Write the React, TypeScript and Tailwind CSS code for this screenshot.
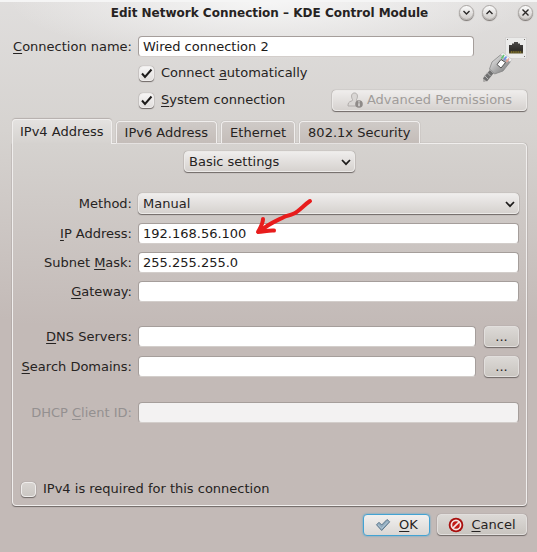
import type { ReactNode } from "react";

const raised =
  "rounded-[4px] border border-[#eceae8] bg-linear-to-b from-[#efedec] to-[#d6d2cf] shadow-[0_1px_1px_#6f6967,0_0_1px_#857e7b]";
const field =
  "block h-[21px] w-full min-w-0 rounded-[4px] border border-[#a59e9b] border-b-[#d3cecb] bg-white px-1 text-[13px] leading-[18px] text-[#1c1a19] outline-none disabled:bg-[#f3f2f2]";

function U({ children }: { children: ReactNode }) {
  return <span className="underline decoration-1 underline-offset-2">{children}</span>;
}

function WindowButton({ label, path }: { label: string; path: string }) {
  return (
    <button
      type="button"
      aria-label={label}
      className="flex size-[15px] items-center justify-center rounded-full border border-[#aaa6a3] bg-linear-to-b from-[#fbfbfb] to-[#d0cdca] shadow-[0_1px_1px_#77716e]"
    >
      <svg viewBox="0 0 9 9" className="size-[9px]" fill="none" stroke="#2b2928" strokeWidth="1.400" aria-hidden="true">
        <path d={path} />
      </svg>
    </button>
  );
}

function Check({ id, checked = false, children }: { id: string; checked?: boolean; children: ReactNode }) {
  return (
    <div className="flex h-[22px] items-center gap-[7px]">
      <span className="relative flex">
        <input
          id={id}
          type="checkbox"
          defaultChecked={checked}
          className={
            "peer size-[15px] appearance-none rounded-[4px] border border-[#efedec] shadow-[0_1px_1px_#6f6967,0_0_1px_#857e7b] " +
            (checked ? "bg-linear-to-b from-[#f6f5f5] to-[#e2dfdd]" : "bg-linear-to-b from-[#d8d4d1] to-[#cbc7c3]")
          }
        />
        <svg
          viewBox="0 0 15 15"
          className="pointer-events-none absolute inset-0 hidden size-[15px] peer-checked:block"
          fill="none"
          stroke="#1d1b1a"
          strokeWidth="2"
          aria-hidden="true"
        >
          <path d="M3 7.5 6 11 12.5 3.5" />
        </svg>
      </span>
      <label htmlFor={id}>{children}</label>
    </div>
  );
}

function Dropdown({ id, value, label }: { id: string; value: string; label?: string }) {
  return (
    <div className="relative w-full">
      <select
        id={id}
        aria-label={label}
        className={"block h-[21px] w-full appearance-none pr-5 pl-1 text-[13px] leading-[18px] outline-none " + raised}
      >
        <option>{value}</option>
      </select>
      <svg
        viewBox="0 0 10 10"
        className="pointer-events-none absolute top-[6px] right-1 size-[10px]"
        fill="none"
        stroke="#1d1b1a"
        strokeWidth="1.700"
        aria-hidden="true"
      >
        <path d="M1 3 5 7.200 9 3" />
      </svg>
    </div>
  );
}

function Row({ id, label, muted = false, children }: { id: string; label: ReactNode; muted?: boolean; children: ReactNode }) {
  return (
    <div className="grid grid-cols-[119px_minmax(0,1fr)] items-center gap-[6px]">
      <label htmlFor={id} className={"text-right whitespace-nowrap " + (muted ? "text-[#949090]" : "")}>
        {label}
      </label>
      <div className="flex gap-2">{children}</div>
    </div>
  );
}

function MoreButton({ label }: { label: string }) {
  return (
    <button
      type="button"
      aria-label={label}
      className="h-[21px] w-[35px] shrink-0 rounded-[4px] border border-[#e2dfdd] bg-linear-to-b from-[#dcd9d6] to-[#c9c5c0] leading-[18px] shadow-[0_1px_1px_#6f6967,0_0_1px_#857e7b]"
    >
      ...
    </button>
  );
}

function EthernetIcon() {
  return (
    <svg viewBox="0 0 44 46" className="h-[46px] w-[44px]" aria-hidden="true">
      <defs>
        <linearGradient id="plug" x1="0" y1="0" x2="1" y2="1">
          <stop offset="0" stopColor="#f2f2f2" />
          <stop offset="0.5" stopColor="#b0b0b0" />
          <stop offset="1" stopColor="#6e6e6e" />
        </linearGradient>
        <linearGradient id="jack" x1="0" y1="0" x2="0" y2="1">
          <stop offset="0" stopColor="#4a4846" />
          <stop offset="0.7" stopColor="#2f2d2a" />
          <stop offset="1" stopColor="#5c5428" />
        </linearGradient>
      </defs>
      <rect x="22.5" y="1.5" width="21" height="21" fill="#ebebea" stroke="#d6d4d3" />
      <g fill="#77716e">
        <rect x="24" y="3" width="1" height="1" />
        <rect x="41" y="3" width="1" height="1" />
        <rect x="41" y="20" width="1" height="1" />
      </g>
      <path d="M26 17.500V9h3V7.500h2V6h4v1.500h2V9h3v8.500z" fill="url(#jack)" />
      <path d="M28 16h10" stroke="#8a7a2a" strokeWidth="1.500" strokeDasharray="1 .8" />
      <path d="M0 45.500 5 38.500" stroke="#b0aeac" strokeWidth="4" />
      <path d="M2 44 10 34" stroke="#707070" strokeWidth="5" />
      <path d="M1.500 39.500 5 43M4 36.500 7.500 40M6.500 33.500 10 37" stroke="#b9b9b9" strokeWidth="1" />
      <path d="M6.500 33 9 26 18 18.500 27.500 25.500 20 35 11.500 38z" fill="url(#plug)" stroke="#858585" strokeWidth=".8" />
      <path d="M17.500 18.500 20 16.500 29 23.500 27 26z" fill="#f1f1f1" stroke="#b5b5b5" strokeWidth=".5" />
      <path d="m14 28.500 4-5 4.500 3-4.500 5.500z" fill="#fff" stroke="#444" strokeWidth=".9" />
      <path d="m18.500 22.500 2.500-3.500" stroke="#5ec774" strokeWidth="1.500" />
      <path d="m21 24 2.500-3.500" stroke="#698fea" strokeWidth="1.500" />
      <path d="m23.500 26 2.500-3.500" stroke="#e8a195" strokeWidth="1.500" />
    </svg>
  );
}

function UserIcon() {
  return (
    <svg viewBox="0 0 16 16" className="size-4" aria-hidden="true">
      <path
        d="M5.500 7.500C3.700 4.500 4.500 1 7.500 1s3.800 3.500 2 6.500c-.4 1 .3 1.300 1.500 1.800 2 .8 2.500 1.700 2.500 4.700H1c0-3 .8-4 3-4.800 1.200-.4 1.800-.8 1.500-1.700z"
        fill="#d9d6d4"
        stroke="#b0acaa"
      />
      <circle cx="12" cy="12" r="3.800" fill="#8e8a88" />
      <path d="M12 11.300v3M12 9.300v1.200" stroke="#e8e6e5" strokeWidth="1.300" />
    </svg>
  );
}

function OkIcon() {
  return (
    <svg viewBox="0 0 16 14" className="h-[14px] w-4" aria-hidden="true">
      <path d="M1.500 6.800 4 4.300 6.700 7 12 1.500 14.700 3.800 6.700 12.500z" fill="#8faabd" stroke="#5d788c" />
      <path d="M3 6.700 6.700 10.300 13 3.500" fill="none" stroke="#b5cad9" />
    </svg>
  );
}

function CancelIcon() {
  return (
    <svg viewBox="0 0 16 16" className="size-4" aria-hidden="true">
      <circle cx="8" cy="8" r="7.300" fill="#a80f0e" />
      <circle cx="8" cy="8" r="5.300" fill="#c21a17" />
      <circle cx="8" cy="8" r="4.600" fill="none" stroke="#f4e6e5" strokeWidth="1.700" />
      <path d="m4.800 11.200 6.400-6.400" stroke="#f4e6e5" strokeWidth="1.700" />
    </svg>
  );
}

const tabs = ["IPv4 Address", "IPv6 Address", "Ethernet", "802.1x Security"];

export default function App() {
  return (
    <div className="min-h-screen bg-[radial-gradient(ellipse_260px_60px_at_50%_0,#f6f6f6,transparent),linear-gradient(#e0dedd_0,#d6d3d0_130px,#c3bab7_320px)] font-['DejaVu_Sans',sans-serif] text-[13px] leading-4 text-[#262322]">
      <header className="flex h-[23px] items-center border-t-2 border-[#f5f5f5] pr-1">
        <h1 className="min-w-0 flex-1 pl-20 text-center text-[12px] font-bold whitespace-nowrap">
          Edit Network Connection – KDE Control Module
        </h1>
        <div className="flex gap-2">
          <WindowButton label="Minimize" path="M1.500 3 4.500 6 7.500 3" />
          <WindowButton label="Maximize" path="M1.500 6 4.500 3 7.500 6" />
          <span className="w-[5px]" />
          <WindowButton label="Close" path="m1.500 1.500 6 6M7.500 1.500l-6 6" />
        </div>
      </header>

      <main className="px-[10px] pt-[13px]">
        <div className="flex">
          <div className="min-w-0 flex-1">
            <div className="flex items-center gap-[6px]">
              <label htmlFor="name" className="w-[122px] shrink-0 text-right whitespace-nowrap">
                <U>C</U>onnection name:
              </label>
              <input id="name" defaultValue="Wired connection 2" className={field} />
            </div>
            <div className="mt-[5px] pl-[129px]">
              <Check id="auto" checked>
                Connect <U>a</U>utomatically
              </Check>
            </div>
          </div>
          <div className="-mb-1 w-[53px] shrink-0 pl-[9px]">
            <EthernetIcon />
          </div>
        </div>
        <div className="mt-[5px] flex items-center justify-between pl-[129px]">
          <Check id="system" checked>
            <U>S</U>ystem connection
          </Check>
          <button
            type="button"
            disabled
            className={"flex h-[21px] w-[195px] items-center justify-center gap-1 whitespace-nowrap text-[#a09c9a] " + raised}
          >
            <UserIcon />
            Advanced Permissions
          </button>
        </div>

        <div role="tablist" className="mt-2 ml-[2px] flex items-end gap-1">
          {tabs.map((tab, i) => (
            <button
              key={tab}
              type="button"
              role="tab"
              aria-selected={i === 0}
              className={
                "rounded-t-[4px] border border-b-0 border-[#f0eeed] whitespace-nowrap " +
                (i === 0
                  ? "relative z-10 -mb-px h-[25px] bg-linear-to-b from-[#e4e2e0] to-[#d5d2cf] px-[7px] shadow-[0_-1px_1px_#b5afac]"
                  : "h-[22px] bg-linear-to-b from-[#cfcac7] to-[#c4bdb9] px-2 shadow-[0_0_1px_#857e7b]")
              }
            >
              {tab}
            </button>
          ))}
        </div>

        <section
          role="tabpanel"
          aria-label="IPv4 Address"
          className="ml-[2px] rounded-[4px] rounded-tl-none border border-[#f0eeed] bg-linear-to-b from-[#d5d2cf] to-[#c3bab7] to-50% pb-[5px] shadow-[0_1px_1px_#6f6967,0_0_1px_#857e7b]"
        >
          <div className="mx-auto w-[171px] pt-[7px]">
            <Dropdown id="mode" value="Basic settings" label="Settings mode" />
          </div>
          <div className="pr-[7px]">
            <div className="mt-[21px]">
              <Row id="method" label="Method:">
                <Dropdown id="method" value="Manual" />
              </Row>
            </div>
            <div className="mt-[9px] flex flex-col gap-2">
              <Row id="ip" label={<><U>I</U>P Address:</>}>
                <div className="relative w-full">
                  <input id="ip" defaultValue="192.168.56.100" className={field} />
                  <svg
                    viewBox="0 0 60 40"
                    className="pointer-events-none absolute -top-[25px] left-[115px] h-10 w-[60px]"
                    fill="none"
                    stroke="#e81c1c"
                    strokeWidth="4"
                    strokeLinecap="round"
                    strokeLinejoin="round"
                    aria-hidden="true"
                  >
                    <path d="M57 3C51 7 46 13 41 15.500S35 17 31 19C23 23 13 27 8 33M10 21C10 26 7 30 5 34 10 34 15 32 21 32.500" />
                  </svg>
                </div>
              </Row>
              <Row id="mask" label={<>Subnet <U>M</U>ask:</>}>
                <input id="mask" defaultValue="255.255.255.0" className={field} />
              </Row>
              <Row id="gateway" label={<><U>G</U>ateway:</>}>
                <input id="gateway" className={field} />
              </Row>
            </div>
            <div className="mt-6 flex flex-col gap-[9px]">
              <Row id="dns" label={<><U>D</U>NS Servers:</>}>
                <input id="dns" className={field} />
                <MoreButton label="Edit DNS servers" />
              </Row>
              <Row id="search" label={<><U>S</U>earch Domains:</>}>
                <input id="search" className={field} />
                <MoreButton label="Edit search domains" />
              </Row>
            </div>
            <div className="mt-[25px]">
              <Row id="dhcp" muted label={<>DHCP <U>C</U>lient ID:</>}>
                <input id="dhcp" disabled className={field} />
              </Row>
            </div>
          </div>
          <div className="mt-[55px] pl-2">
            <Check id="required">IPv4 is required for this connection</Check>
          </div>
        </section>

        <footer className="mt-2 flex justify-end gap-[7px]">
          <button
            type="button"
            className="flex h-[22px] w-[67px] items-center justify-center gap-2 rounded-[4px] border border-[#43a3d3] bg-linear-to-b from-[#f1f0ef] to-[#dad7d4] shadow-[0_0_2px_#43a3d3]"
          >
            <OkIcon />
            <span><U>O</U>K</span>
          </button>
          <button
            type="button"
            className="flex h-[21px] w-[90px] items-center justify-center gap-[7px] rounded-[4px] border border-[#e2dfdd] bg-linear-to-b from-[#dcd9d6] to-[#c9c5c0] shadow-[0_1px_1px_#6f6967,0_0_1px_#857e7b]"
          >
            <CancelIcon />
            <span><U>C</U>ancel</span>
          </button>
        </footer>
      </main>
    </div>
  );
}
